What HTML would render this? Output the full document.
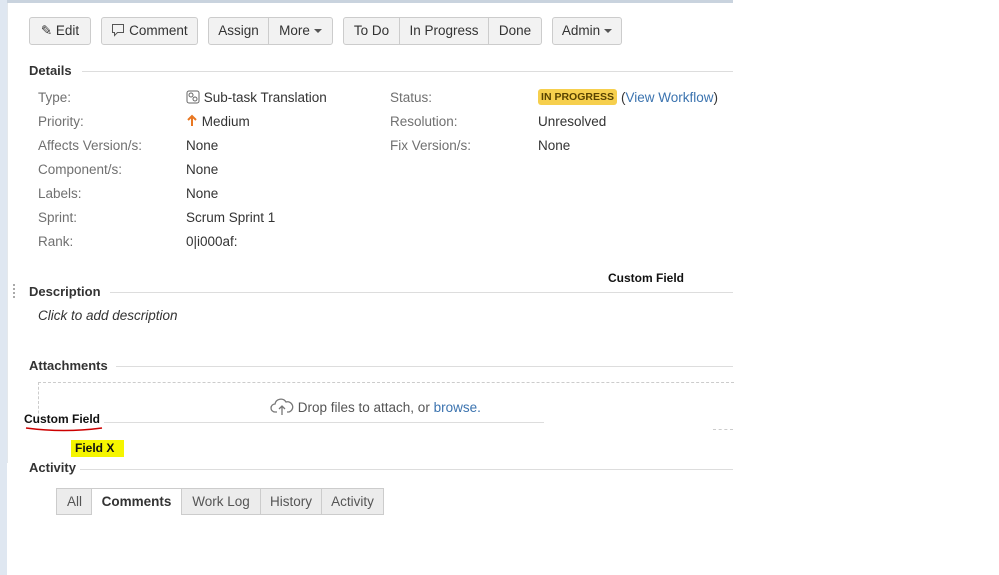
<!DOCTYPE html>
<html><head><style>
body{margin:0;width:999px;height:575px;background:#fff;position:relative;overflow:hidden;font-family:"Liberation Sans",Arial,sans-serif;font-size:13.5px;color:#333}
.a{position:absolute}
.btn{position:absolute;top:17px;height:28px;border:1px solid #ccc;background:#f2f2f2;border-radius:3px;box-sizing:border-box;line-height:26px;text-align:center;color:#333;font-size:13.5px}
.h{position:absolute;font-weight:bold;font-size:13px;color:#333}
.ln{position:absolute;height:1px;background:#ddd}
.lb{position:absolute;color:#707070}
.v{position:absolute;color:#333}
.car{display:inline-block;border-left:4px solid transparent;border-right:4px solid transparent;border-top:4px solid #555;vertical-align:middle;margin-left:4px}
.tab{position:absolute;top:488px;height:27px;border:1px solid #ccc;background:#ececec;box-sizing:border-box;line-height:26px;text-align:center;color:#555;font-size:13.5px}
</style></head><body>
<div class="a" style="left:0;top:0;width:7px;height:575px;background:#dfe7f1"></div>
<div class="a" style="left:7px;top:0;width:726px;height:3px;background:#c9d3de"></div>
<div class="a" style="left:7px;top:3px;width:1px;height:460px;background:#e4e8ec"></div>

<div class="btn" style="left:29px;width:62px">✎ Edit</div>
<div class="btn" style="left:101px;width:97px"><svg width="14" height="14" viewBox="0 0 14 14" style="vertical-align:-2px"><path d="M1.5 1.5h11v8h-6l-3 3v-3h-2z" fill="none" stroke="#555"/></svg> Comment</div>
<div class="btn" style="left:208px;width:61px;border-radius:3px 0 0 3px">Assign</div>
<div class="btn" style="left:268px;width:65px;border-radius:0 3px 3px 0">More<span class="car"></span></div>
<div class="btn" style="left:343px;width:57px;border-radius:3px 0 0 3px">To Do</div>
<div class="btn" style="left:399px;width:90px;border-radius:0">In Progress</div>
<div class="btn" style="left:488px;width:54px;border-radius:0 3px 3px 0">Done</div>
<div class="btn" style="left:552px;width:70px">Admin<span class="car"></span></div>

<div class="h" style="left:29px;top:63px">Details</div><div class="ln" style="left:82px;top:71px;width:651px"></div>
<div class="lb" style="left:38px;top:90px">Type:</div><div class="v" style="left:186px;top:90px"><svg width="14" height="14" viewBox="0 0 14 14" style="vertical-align:-2px"><rect x="1" y="1" width="12" height="12" rx="2" fill="none" stroke="#666"/><circle cx="5" cy="5" r="2" fill="none" stroke="#666"/><circle cx="9" cy="9" r="2" fill="none" stroke="#666"/></svg> Sub-task Translation</div>
<div class="lb" style="left:38px;top:114px">Priority:</div><div class="v" style="left:186px;top:114px"><svg width="12" height="13" viewBox="0 0 12 13" style="vertical-align:-1px"><path d="M6 12V2M2 6l4-4 4 4" fill="none" stroke="#e87722" stroke-width="2"/></svg> Medium</div>
<div class="lb" style="left:38px;top:138px">Affects Version/s:</div><div class="v" style="left:186px;top:138px">None</div>
<div class="lb" style="left:38px;top:162px">Component/s:</div><div class="v" style="left:186px;top:162px">None</div>
<div class="lb" style="left:38px;top:186px">Labels:</div><div class="v" style="left:186px;top:186px">None</div>
<div class="lb" style="left:38px;top:210px">Sprint:</div><div class="v" style="left:186px;top:210px">Scrum Sprint 1</div>
<div class="lb" style="left:38px;top:234px">Rank:</div><div class="v" style="left:186px;top:234px">0|i000af:</div>
<div class="lb" style="left:390px;top:90px">Status:</div>
<div class="a" style="left:538px;top:89px;width:79px;height:16px;background:#f6cf4d;border-radius:3px;font-size:10.5px;font-weight:bold;color:#594300;text-align:center;line-height:16px">IN PROGRESS</div>
<div class="v" style="left:621px;top:90px">(<span style="color:#3b73af">View Workflow</span>)</div>
<div class="lb" style="left:390px;top:114px">Resolution:</div><div class="v" style="left:538px;top:114px">Unresolved</div>
<div class="lb" style="left:390px;top:138px">Fix Version/s:</div><div class="v" style="left:538px;top:138px">None</div>

<div class="a" style="left:608px;top:271px;font-weight:bold;font-size:12px;color:#111">Custom Field</div>
<div class="a" style="left:13px;top:284px;width:2px;height:14px;border-left:2px dotted #aaa"></div>
<div class="h" style="left:29px;top:284px">Description</div><div class="ln" style="left:110px;top:292px;width:623px"></div>
<div class="a" style="left:38px;top:308px;font-style:italic;color:#333">Click to add description</div>

<div class="h" style="left:29px;top:358px">Attachments</div><div class="ln" style="left:116px;top:366px;width:617px"></div>
<div class="a" style="left:38px;top:382px;width:695px;height:40px;border-top:1px dashed #ccc;border-left:1px dashed #ccc"></div>
<div class="a" style="left:713px;top:429px;width:20px;border-top:1px dashed #ccc"></div>
<div class="a" style="left:270px;top:398px;color:#555"><svg width="24" height="18" viewBox="0 0 24 18" style="vertical-align:-4px"><path d="M7 14H5a4 4 0 0 1 0-8 6 6 0 0 1 11-2 5 5 0 0 1 3 10h-2" fill="none" stroke="#777" stroke-width="1.3"/><path d="M12 17V8M9 11l3-3 3 3" fill="none" stroke="#777" stroke-width="1.3"/></svg> Drop files to attach, or <span style="color:#3b73af">browse.</span></div>
<div class="a" style="left:24px;top:412px;font-weight:bold;font-size:12px;color:#111">Custom Field</div>
<div class="ln" style="left:104px;top:422px;width:440px"></div>
<svg class="a" style="left:24px;top:425px" width="80" height="8"><path d="M2 3Q40 8 78 3" fill="none" stroke="#c00" stroke-width="1.5"/></svg>
<div class="a" style="left:71px;top:440px;width:53px;height:17px;background:#f5f500;font-weight:bold;font-size:12px;color:#111;line-height:17px;padding-left:4px;box-sizing:border-box">Field X</div>

<div class="h" style="left:29px;top:460px">Activity</div><div class="ln" style="left:80px;top:469px;width:653px"></div>
<div class="tab" style="left:56px;width:36px;border-right:none">All</div>
<div class="tab" style="left:91px;width:91px;background:#fff;font-weight:bold;color:#333;border-bottom:none">Comments</div>
<div class="tab" style="left:181px;width:80px">Work Log</div>
<div class="tab" style="left:260px;width:62px">History</div>
<div class="tab" style="left:321px;width:63px">Activity</div>
</body></html>
